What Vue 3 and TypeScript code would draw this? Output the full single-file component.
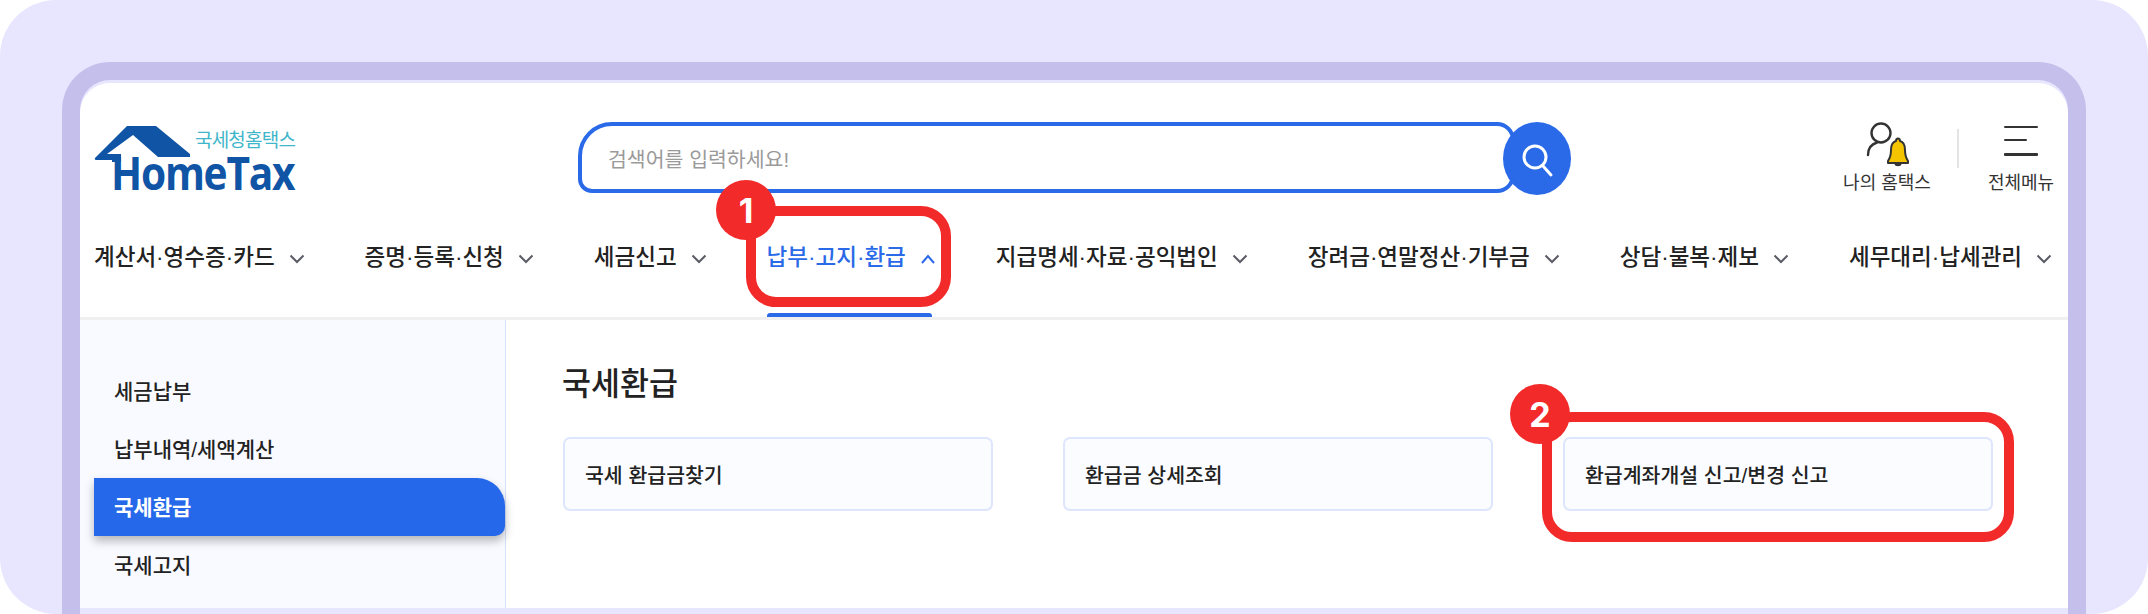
<script setup lang="ts">
const navItems: { label: string; active?: boolean }[] = [
  { label: '계산서·영수증·카드' },
  { label: '증명·등록·신청' },
  { label: '세금신고' },
  { label: '납부·고지·환급', active: true },
  { label: '지급명세·자료·공익법인' },
  { label: '장려금·연말정산·기부금' },
  { label: '상담·불복·제보' },
  { label: '세무대리·납세관리' },
]
const sideItems: { label: string; active?: boolean }[] = [
  { label: '세금납부' },
  { label: '납부내역/세액계산' },
  { label: '국세환급', active: true },
  { label: '국세고지' },
]
const cards = ['국세 환급금찾기', '환급금 상세조회', '환급계좌개설 신고/변경 신고']
</script>

<template>
  <div class="page">
    <div class="frame">
      <div class="screen">
        <header class="top">
          <div class="logo">
            <svg class="roof" width="100" height="40" viewBox="0 0 100 40">
              <path d="M1 33 L33 1 H62 L96 29 V32 H64 L39 10 L13 29 H27 V37 H18 V35 H3 Q0 35 1 33 Z" fill="#1055a5" />
            </svg>
            <span class="logo-kr">국세청홈택스</span>
            <span class="logo-en">HomeTax</span>
          </div>
          <div class="search">
            <div class="search-box">검색어를 입력하세요!</div>
            <div class="search-btn">
              <svg width="36" height="38" viewBox="0 0 36 38" fill="none" stroke="#fff" stroke-width="3">
                <circle cx="16" cy="17" r="11" />
                <path d="M24 26 L32 35" stroke-linecap="round" />
              </svg>
            </div>
          </div>
          <div class="tools">
            <div class="tool tool-my">
              <svg width="56" height="50" viewBox="0 0 56 50" fill="none">
                <circle cx="21" cy="13" r="9.5" stroke="#333" stroke-width="2.4" />
                <path d="M8 35 C8 28 12 24 17 22.5" stroke="#333" stroke-width="2.4" stroke-linecap="round" />
                <path d="M38 18.500 C39.500 18.500 40 20 40 21 C44 22 45 26 45 30 C45 35 46 38 48 41 V43 H28 V41 C30 38 31 35 31 30 C31 26 32 22 36 21 C36 20 36.500 18.500 38 18.500 Z" fill="#f5c400" stroke="#333" stroke-width="2" stroke-linejoin="round" />
                <path d="M34.500 44 H41.500 C41.500 47 34.500 47 34.500 44 Z" fill="#333" />
              </svg>
              <span>나의 홈택스</span>
            </div>
            <div class="divider"></div>
            <div class="tool tool-menu">
              <div class="burger">
                <i class="b1"></i>
                <i class="b2"></i>
                <i class="b3"></i>
              </div>
              <span>전체메뉴</span>
            </div>
          </div>
        </header>

        <nav class="nav">
          <div v-for="item in navItems" :key="item.label" class="nav-item" :class="{ on: item.active }">
            <span>{{ item.label }}</span>
            <svg width="16" height="10" viewBox="0 0 16 10" fill="none" :stroke="item.active ? '#2a6ae8' : '#5b5b66'" stroke-width="2">
              <path v-if="item.active" d="M2 9 L8 2 L14 9" />
              <path v-else d="M1.500 1.500 L8 8 L14.500 1.500" />
            </svg>
          </div>
        </nav>

        <div class="body">
          <aside class="side">
            <div v-for="item in sideItems" :key="item.label" class="side-item" :class="{ on: item.active }">{{ item.label }}</div>
          </aside>
          <main class="main">
            <h2>국세환급</h2>
            <div class="cards">
              <div v-for="c in cards" :key="c" class="card">{{ c }}</div>
            </div>
          </main>
        </div>
      </div>
    </div>

    <div class="mark mark-1"></div>
    <div class="badge badge-1">1</div>
    <div class="mark mark-2"></div>
    <div class="badge badge-2">2</div>
  </div>
</template>

<style>
body { margin: 0; background: #fff; }
</style>

<style scoped>
.page {
  position: relative;
  width: 2148px;
  height: 614px;
  box-sizing: border-box;
  padding: 62px 62px 0;
  background: #e8e5fe;
  border-radius: 56px;
  overflow: hidden;
  font-family: "Liberation Sans", "Noto Sans CJK KR", sans-serif;
  color: #222;
}
.frame {
  height: 552px;
  box-sizing: border-box;
  border: solid #c4bfeb;
  border-width: 18px 18px 0;
  border-radius: 48px 48px 0 0;
  background: #e8e5fe;
  padding: 3px 0 6px;
  overflow: hidden;
}
.screen {
  height: 100%;
  background: #fff;
  border-radius: 30px 30px 0 0;
  display: flex;
  flex-direction: column;
  overflow: hidden;
}
.top {
  height: 124px;
  flex: none;
  display: flex;
  align-items: flex-start;
}
.logo {
  position: relative;
  width: 498px;
  height: 120px;
  flex: none;
}
.roof { position: absolute; left: 14px; top: 42px; }
.logo-kr {
  position: absolute;
  left: 115px;
  top: 49px;
  font-size: 19px;
  line-height: 18px;
  letter-spacing: -0.8px;
  color: #3fb6ca;
  white-space: nowrap;
}
.logo-en {
  position: absolute;
  left: 31px;
  top: 69px;
  font-family: "Open Sans", sans-serif;
  font-weight: 700;
  font-size: 46px;
  line-height: 40px;
  letter-spacing: -1.4px;
  color: #1055a5;
  transform: scaleX(0.885);
  transform-origin: left center;
}
.search {
  display: flex;
  margin-top: 39px;
}
.search-box {
  width: 937px;
  height: 71px;
  box-sizing: border-box;
  border: 4px solid #2a6ae8;
  border-radius: 34px 18px 18px 14px;
  padding-left: 26px;
  display: flex;
  align-items: center;
  font-size: 20.5px;
  color: #9a9a9a;
}
.search-btn {
  width: 68px;
  height: 73px;
  margin-left: -12px;
  border-radius: 50%;
  background: #2a6ae8;
  display: flex;
  align-items: center;
  justify-content: center;
}
.tools {
  display: flex;
  align-items: flex-start;
  margin-left: 271px;
  margin-top: 37px;
}
.tool {
  display: flex;
  flex-direction: column;
  align-items: center;
  font-size: 18px;
  line-height: 24px;
  white-space: nowrap;
  color: #333;
}
.tool-my { width: 90px; }
.tool-my svg { margin-bottom: 1px; margin-left: 2px; }
.divider {
  width: 2px;
  height: 39px;
  margin: 9px 28px 0 25px;
  background: #e4e4e4;
}
.tool-menu { width: 68px; }
.burger {
  width: 34px;
  height: 51px;
  display: flex;
  flex-direction: column;
  align-items: flex-start;
  padding-top: 6px;
  box-sizing: border-box;
}
.burger i { display: block; background: #333; border-radius: 1px; }
.b1 { width: 34px; height: 2px; }
.b2 { width: 23px; height: 2px; margin-top: 11px; }
.b3 { width: 34px; height: 3px; margin-top: 12px; }

.nav {
  flex: none;
  height: 113px;
  box-sizing: border-box;
  border-bottom: 3px solid #f0f0f0;
  padding-left: 14px;
  display: flex;
  align-items: flex-start;
  gap: 60px;
}
.nav-item {
  position: relative;
  height: 110px;
  display: flex;
  align-items: flex-start;
  gap: 14px;
  font-size: 22.5px;
  font-weight: 500;
  line-height: 34px;
  padding-top: 34px;
  box-sizing: border-box;
  white-space: nowrap;
  color: #222;
}
.nav-item svg { margin-top: 13px; }
.nav-item.on { color: #2a6ae8; }
.nav-item.on::after {
  content: "";
  position: absolute;
  left: 0;
  right: 4px;
  bottom: 0;
  height: 4px;
  border-radius: 3px 3px 0 0;
  background: #2a6ae8;
}
.body {
  flex: 1;
  display: flex;
  min-height: 0;
}
.side {
  width: 426px;
  flex: none;
  box-sizing: border-box;
  background: #f9faff;
  border-right: 1px solid #d8e2fb;
  padding: 42px 0 0 14px;
}
.side-item {
  height: 58px;
  box-sizing: border-box;
  padding: 0 0 2px 20px;
  display: flex;
  align-items: center;
  font-size: 21px;
  font-weight: 500;
  color: #222;
}
.side-item.on {
  color: #fff;
  background: #2568ea;
  border-radius: 0 28px 10px 0;
  box-shadow: 0 5px 10px rgba(0, 0, 0, 0.28);
  font-weight: 700;
}
.main {
  flex: 1;
  padding: 44px 0 0 57px;
}
h2 {
  margin: 0 0 33px -1px;
  font-size: 31.500px;
  line-height: 40px;
  font-weight: 500;
  color: #222;
}
.cards {
  display: flex;
  gap: 70px;
}
.card {
  width: 430px;
  height: 74px;
  box-sizing: border-box;
  border: 2px solid #dde6fc;
  border-radius: 7px;
  background: #fbfcff;
  padding-left: 20px;
  display: flex;
  align-items: center;
  font-size: 20.5px;
  font-weight: 500;
  color: #222;
}
.mark {
  position: absolute;
  box-sizing: border-box;
  border: 10px solid #f22a2a;
  border-radius: 30px;
}
.mark-1 { left: 746px; top: 206px; width: 205px; height: 101px; }
.mark-2 { left: 1542px; top: 412px; width: 472px; height: 130px; }
.badge {
  position: absolute;
  width: 60px;
  height: 60px;
  border-radius: 50%;
  background: #f22a2a;
  color: #fff;
  display: flex;
  align-items: center;
  justify-content: center;
  font-family: Inter, sans-serif;
  font-weight: 700;
  font-size: 34px;
}
.badge-1 { left: 716px; top: 180px; }
.badge-2 { left: 1510px; top: 384px; }
</style>
